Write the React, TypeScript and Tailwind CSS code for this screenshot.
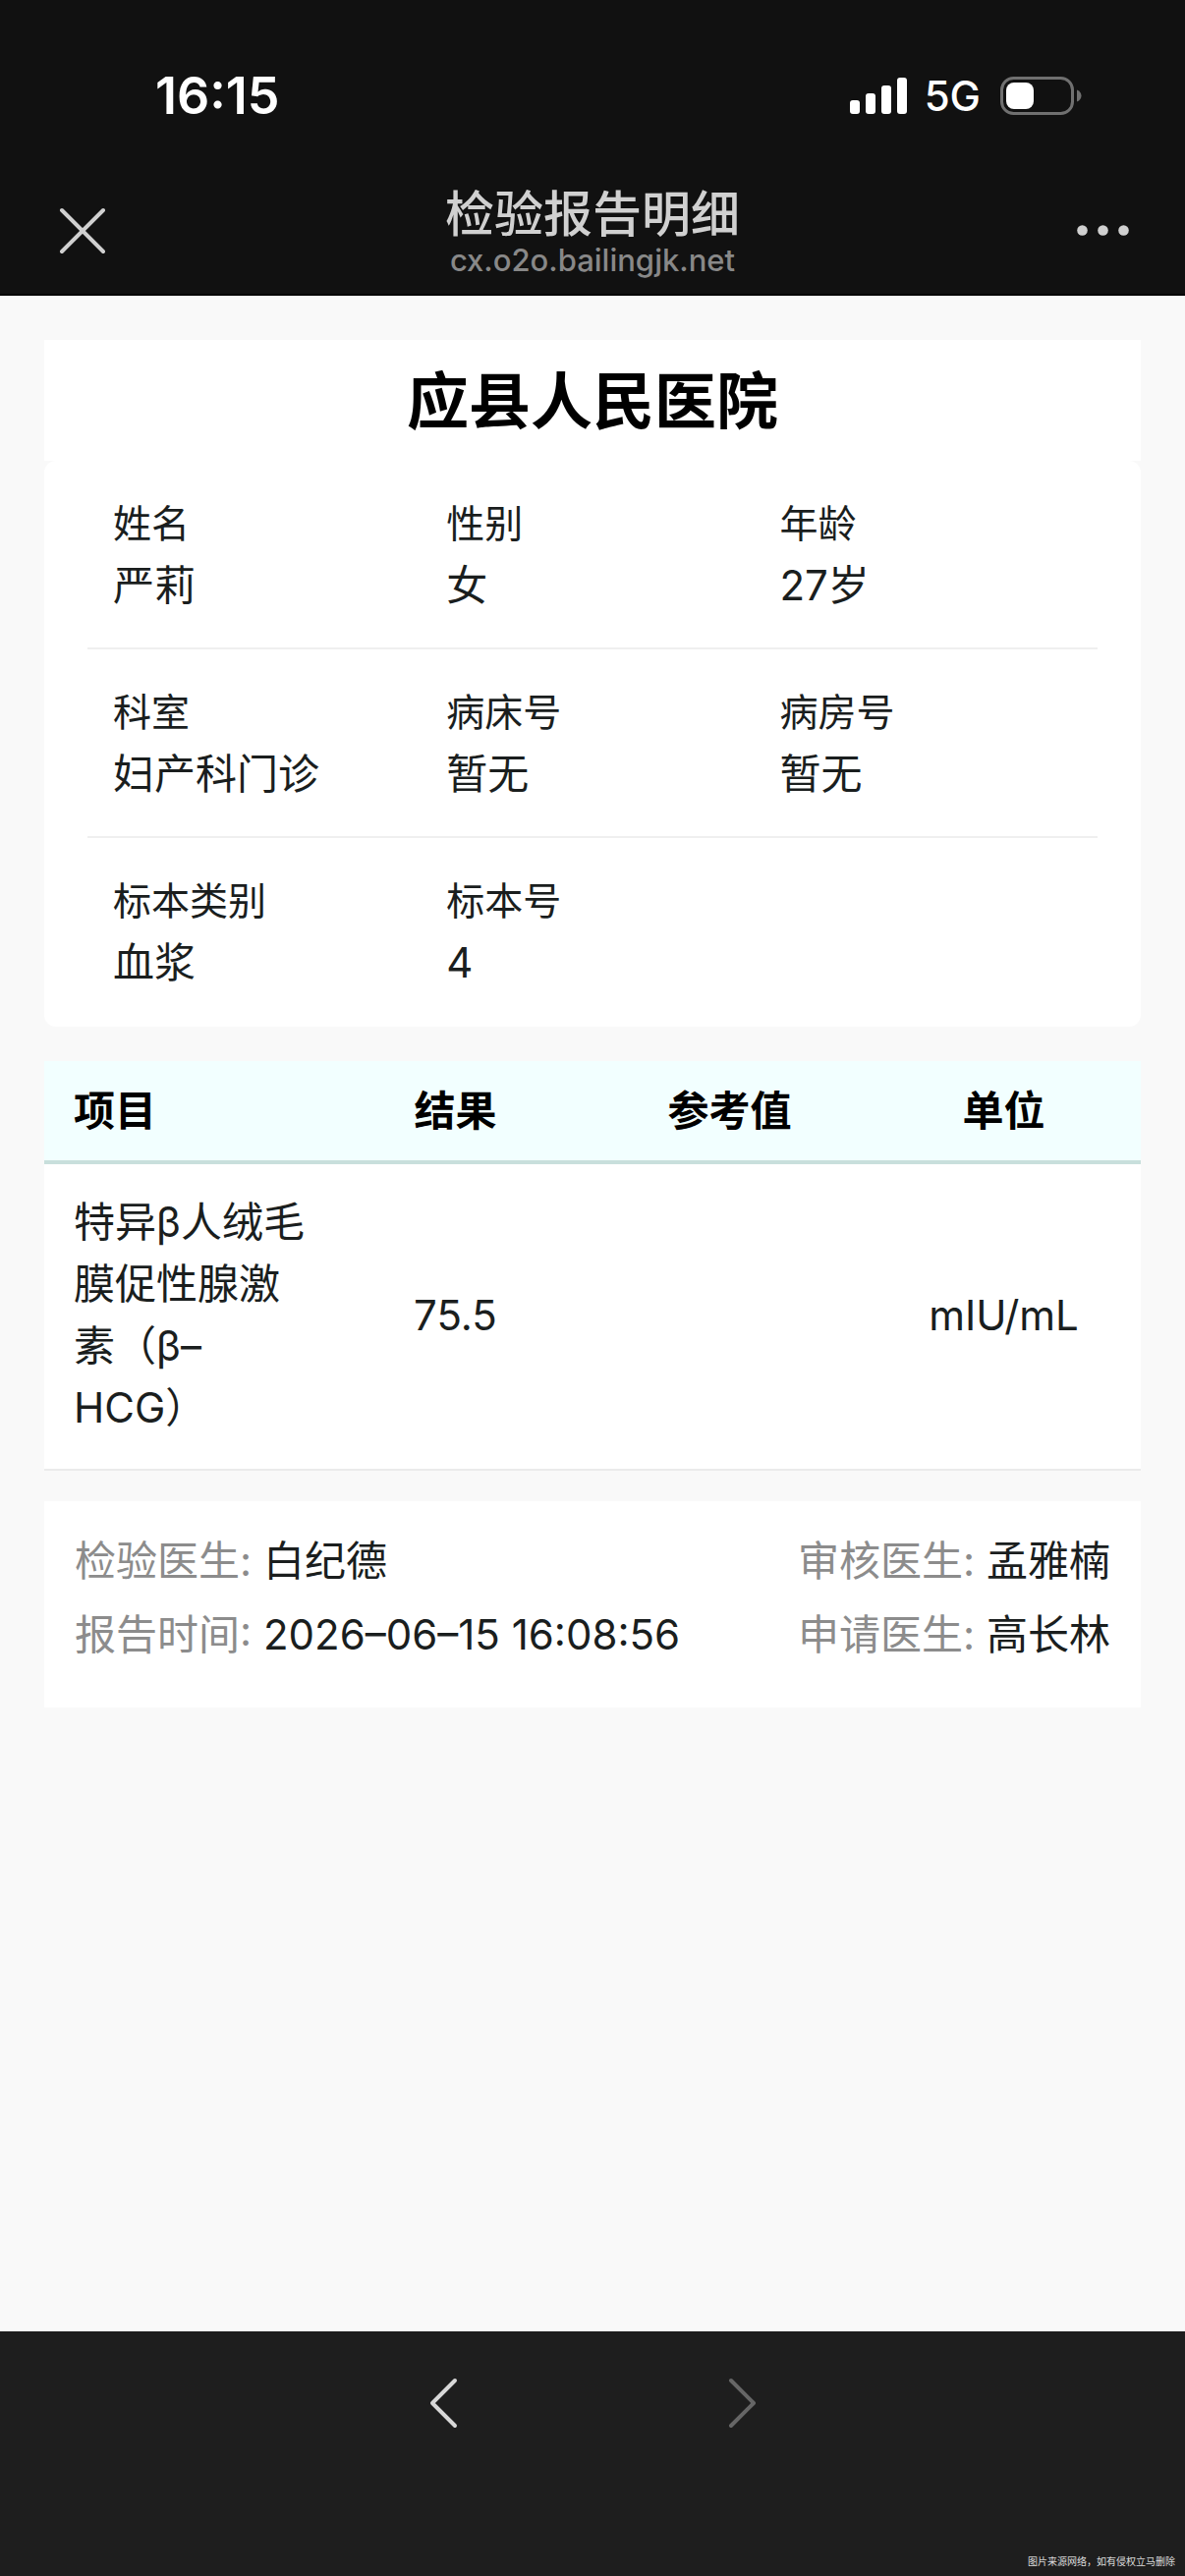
import type { ReactNode } from 'react';

interface Field { label: string; value: string; }
interface ResultItem { name: string; result: string; reference: string; unit: string; }

const INFO_ROWS: Field[][] = [
  [
    { label: '姓名', value: '严莉' },
    { label: '性别', value: '女' },
    { label: '年龄', value: '27岁' },
  ],
  [
    { label: '科室', value: '妇产科门诊' },
    { label: '病床号', value: '暂无' },
    { label: '病房号', value: '暂无' },
  ],
  [
    { label: '标本类别', value: '血浆' },
    { label: '标本号', value: '4' },
  ],
];

const RESULTS: ResultItem[] = [
  { name: '特异β人绒毛膜促性腺激素（β–HCG）', result: '75.5', reference: '', unit: 'mIU/mL' },
];

const FOOTER_ROWS: Field[][] = [
  [{ label: '检验医生', value: '白纪德' }, { label: '审核医生', value: '孟雅楠' }],
  [{ label: '报告时间', value: '2026–06–15 16:08:56' }, { label: '申请医生', value: '高长林' }],
];

function StatusBar() {
  return (
    <div className="flex items-center justify-between pt-[66px] pr-[105px] pl-[158px] text-white">
      <time className="text-[52px] leading-[64px] font-semibold">16:15</time>
      <div className="flex items-center">
        <svg width="58" height="38" viewBox="0 0 58 38" fill="currentColor" aria-hidden="true">
          <rect x="0" y="23" width="10" height="14" rx="3" />
          <rect x="16" y="16" width="10" height="21" rx="3" />
          <rect x="32" y="8" width="10" height="29" rx="3" />
          <rect x="48" y="0" width="10" height="37" rx="3" />
        </svg>
        <span className="ml-[18px] text-[42px] leading-[64px] font-medium">5G</span>
        <svg className="ml-5" width="83" height="40" viewBox="0 0 83 40" fill="none" aria-hidden="true">
          <rect x="1.5" y="1.5" width="72" height="36" rx="12" stroke="#707070" strokeWidth="3" />
          <rect x="6" y="6" width="28" height="27" rx="8" fill="#fff" />
          <path d="M78 13.5c3 1 4.500 3.500 4.500 6s-1.500 5-4.500 6z" fill="#707070" />
        </svg>
      </div>
    </div>
  );
}

function NavBar() {
  return (
    <div className="flex items-center justify-between px-[56px] pt-[57px] pb-[18px] text-[#d0d0d0]">
      <button type="button" aria-label="关闭" className="w-[90px]">
        <svg width="56" height="56" viewBox="0 0 56 56" stroke="currentColor" strokeWidth="4" strokeLinecap="round" aria-hidden="true">
          <path d="M7 8l42 42M49 8L7 50" />
        </svg>
      </button>
      <div className="text-center">
        <h1 className="text-[50px] leading-[62px] font-medium">检验报告明细</h1>
        <p className="text-[31px] leading-[32px] font-medium text-[#888]">cx.o2o.bailingjk.net</p>
      </div>
      <button type="button" aria-label="更多" className="flex w-[90px] justify-end">
        <svg width="54" height="12" viewBox="0 0 54 12" fill="currentColor" aria-hidden="true">
          <circle cx="5.500" cy="6.500" r="5.300" />
          <circle cx="26.500" cy="6.500" r="5.300" />
          <circle cx="47.500" cy="6.500" r="5.300" />
        </svg>
      </button>
    </div>
  );
}

function InfoCard() {
  return (
    <section className="rounded-xl bg-white px-[44px]">
      {INFO_ROWS.map((row, i) => (
        <dl
          key={i}
          className={`flex border-b-2 py-8 ${i < INFO_ROWS.length - 1 ? 'border-[#efefef]' : 'border-transparent'}`}
        >
          {row.map(f => (
            <div key={f.label} className="w-[33%] pl-[26px]">
              <dt className="text-[39px] leading-[63px]">{f.label}</dt>
              <dd className="text-[42px] leading-[63px]">{f.value}</dd>
            </div>
          ))}
        </dl>
      ))}
    </section>
  );
}

function HeadCell({ children, first }: { children: ReactNode; first?: boolean }) {
  return (
    <th scope="col" className={`border-b-4 border-[#c8dfdc] py-[19px] font-bold text-black ${first ? 'pl-[30px] text-left' : 'text-center'}`}>
      {children}
    </th>
  );
}

function ResultTable() {
  return (
    <table className="mt-[35px] w-full table-fixed bg-white text-[42px] leading-[63px]">
      <thead className="bg-[#f2ffff]">
        <tr>
          <HeadCell first>项目</HeadCell>
          <HeadCell>结果</HeadCell>
          <HeadCell>参考值</HeadCell>
          <HeadCell>单位</HeadCell>
        </tr>
      </thead>
      <tbody>
        {RESULTS.map(r => (
          <tr key={r.name} className="border-b-2 border-[#ebebeb] text-center">
            <td className="pt-[27px] pr-3 pb-[31px] pl-[30px] text-left">{r.name}</td>
            <td className="pb-1">{r.result}</td>
            <td className="pb-1">{r.reference}</td>
            <td className="pb-1">{r.unit}</td>
          </tr>
        ))}
      </tbody>
    </table>
  );
}

function ReportFooter() {
  return (
    <section className="mt-[31px] bg-white px-[31px] pt-[23px] pb-[37px] text-[42px] leading-[75px]">
      {FOOTER_ROWS.map((row, i) => (
        <div key={i} className="flex justify-between">
          {row.map(f => (
            <p key={f.label}>
              <span className="text-[#8c8c8c]">{f.label}: </span>
              {f.value}
            </p>
          ))}
        </div>
      ))}
    </section>
  );
}

export default function App() {
  return (
    <div
      lang="zh-CN"
      className="flex min-h-screen flex-col bg-[#f9f9f9] font-['Inter','Noto_Sans_CJK_SC',sans-serif] text-[#1a1e1e]"
    >
      <header className="border-b-2 border-black bg-[#111]">
        <StatusBar />
        <NavBar />
      </header>

      <main className="flex-1 px-[45px] pt-[45px]">
        <h2 className="bg-white pt-[31px] pb-[29px] text-center text-[63px] leading-[63px] font-bold text-black">应县人民医院</h2>
        <InfoCard />
        <ResultTable />
        <ReportFooter />
      </main>

      <footer className="flex flex-col justify-between bg-[#1e1e1e]">
        <nav className="flex justify-center gap-[247px] pt-[46px]">
          <button type="button" aria-label="后退" className="text-[#d8d8d8]">
            <svg width="56" height="56" viewBox="0 0 56 56" fill="none" stroke="currentColor" strokeWidth="4" strokeLinecap="round" strokeLinejoin="round" aria-hidden="true">
              <path d="M39 4L16 27l23 23" />
            </svg>
          </button>
          <button type="button" aria-label="前进" className="text-[#666]" disabled>
            <svg width="56" height="56" viewBox="0 0 56 56" fill="none" stroke="currentColor" strokeWidth="4" strokeLinecap="round" strokeLinejoin="round" aria-hidden="true">
              <path d="M17 4l23 23-23 23" />
            </svg>
          </button>
        </nav>
        <small className="pt-[124px] pr-[10px] pb-[7px] text-right text-[10px] leading-[16px] text-[#ddd]">图片来源网络，如有侵权立马删除</small>
      </footer>
    </div>
  );
}
